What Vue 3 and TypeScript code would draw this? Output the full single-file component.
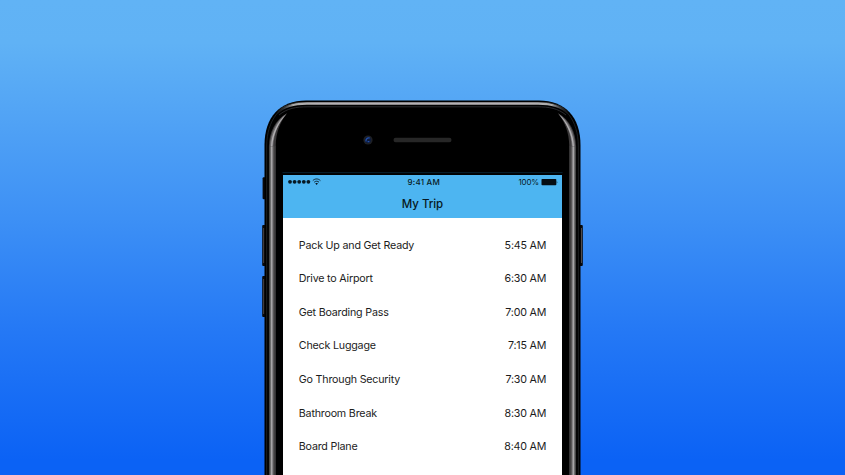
<script setup lang="ts">
interface Stop {
  name: string
  time: string
}

const stops: Stop[] = [
  { name: 'Pack Up and Get Ready', time: '5:45 AM' },
  { name: 'Drive to Airport', time: '6:30 AM' },
  { name: 'Get Boarding Pass', time: '7:00 AM' },
  { name: 'Check Luggage', time: '7:15 AM' },
  { name: 'Go Through Security', time: '7:30 AM' },
  { name: 'Bathroom Break', time: '8:30 AM' },
  { name: 'Board Plane', time: '8:40 AM' },
]
</script>

<template>
  <main class="stage">
    <section class="phone">
      <svg class="body" viewBox="260 98 326 377" aria-hidden="true">
        <defs>
          <linearGradient id="rail" gradientUnits="userSpaceOnUse" x1="268.5" x2="276.5" y1="0" y2="0">
            <stop offset="0" stop-color="#111" />
            <stop offset=".12" stop-color="#444" />
            <stop offset=".28" stop-color="#777" />
            <stop offset=".4" stop-color="#b4b2b4" />
            <stop offset=".5" stop-color="#858385" />
            <stop offset=".66" stop-color="#4b494a" />
            <stop offset=".9" stop-color="#302f30" />
            <stop offset="1" stop-color="#000" />
          </linearGradient>
          <linearGradient id="topEdge" gradientUnits="userSpaceOnUse" x1="276" x2="569" y1="0" y2="0">
            <stop offset="0" stop-color="#555" stop-opacity="0" />
            <stop offset=".06" stop-color="#aaa" />
            <stop offset=".14" stop-color="#b5b2b5" />
            <stop offset=".86" stop-color="#b5b2b5" />
            <stop offset=".94" stop-color="#aaa" />
            <stop offset="1" stop-color="#555" stop-opacity="0" />
          </linearGradient>
          <g id="side">
            <path fill="none" stroke="#26292b" stroke-width=".8" d="M266.7 480V146C266.7 120 281 103.5 298 102.6" />
            <path fill="url(#rail)" d="M268.7 145.8H276.5V480H268.7Z" />
            <path fill="#3b393a" d="M268.9 146.2C269.2 133 275 119.5 287 113.3C280 122.5 276 132 275.7 146.2Z" />
            <path fill="#6f6d6f" d="M269.8 146.2C270.3 133 276 120.5 287 113.3C279 122.5 274 132 273.3 146.2Z" />
            <path fill="#b0aeb0" d="M271 146.2C271.6 134 277 121.5 286 114.5C278.5 123 273.2 134 272.4 146.2Z" />
          </g>
        </defs>
        <g fill="#0a0a0c">
          <rect x="262.6" y="177.3" width="4" height="22" rx="1" />
          <rect x="262.2" y="225" width="4" height="41" rx="1" />
          <rect x="262.2" y="276" width="4" height="41" rx="1" />
          <rect x="578.8" y="225" width="4" height="41" rx="1" />
        </g>
        <g fill="#514b4a">
          <rect x="263.2" y="228" width="1" height="35" />
          <rect x="263.2" y="279" width="1" height="35" />
          <rect x="581" y="228" width="1" height="35" />
        </g>
        <path fill="#000" d="M264.5 480V145C264.5 117 280 100.5 306 100.5H539C565 100.5 580.5 117 580.5 145V480Z" />
        <path fill="none" stroke="url(#topEdge)" stroke-width="2.6" d="M277 113C284 105.8 293 103.5 307 103.5H538C552 103.5 561 105.8 568 113" />
        <path fill="none" stroke="#343538" stroke-width=".8" d="M279 115C287 108.3 296 106.8 308 106.8H537C549 106.8 558 108.3 566 115" />
        <use href="#side" />
        <use href="#side" transform="translate(845 0) scale(-1 1)" />
        <circle cx="368" cy="140" r="4.6" fill="#1e2025" />
        <circle cx="368" cy="140" r="3" fill="#0d1a3c" />
        <path fill="none" stroke="#2450a8" stroke-width="1.3" d="M366 141.5C365.6 139 367.2 137.6 369.6 138M367.6 141.6h1.8" />
        <rect x="393.5" y="137.8" width="58" height="4.4" rx="2.2" fill="#272727" />
        <rect x="282.5" y="172.3" width="280" height=".8" fill="#09283b" />
      </svg>

      <div class="screen">
        <header class="header">
          <div class="status">
            <div class="signal">
              <svg width="34" height="8" viewBox="0 0 34 8">
                <g fill="#071923">
                  <circle cx="2" cy="3.8" r="1.9" />
                  <circle cx="6.6" cy="3.8" r="1.9" />
                  <circle cx="11.2" cy="3.8" r="1.9" />
                  <circle cx="15.8" cy="3.8" r="1.9" />
                  <circle cx="20.4" cy="3.8" r="1.9" />
                </g>
                <path fill="none" stroke="#071923" stroke-width=".9" d="M24.8 2.6C27 .4 30.2 .4 32.4 2.6M26.2 4.2C27.6 2.9 29.6 2.9 31 4.2" />
                <path fill="#071923" d="M27.3 5.4C28.1 4.8 29.1 4.8 29.9 5.4L28.6 6.9Z" />
              </svg>
            </div>
            <span class="clock">9:41 AM</span>
            <div class="power">
              <span class="percent">100%</span>
              <svg width="17" height="7" viewBox="0 0 17 7">
                <rect x=".5" y="0" width="14.8" height="6.2" rx=".8" fill="#050d13" />
                <path fill="#050d13" d="M15.8 1.9Q17 3.1 15.8 4.4Z" />
              </svg>
            </div>
          </div>
          <h1 class="title">My Trip</h1>
        </header>
        <ul class="list">
          <li v-for="stop in stops" :key="stop.name" class="row">
            <span>{{ stop.name }}</span>
            <span class="time">{{ stop.time }}</span>
          </li>
        </ul>
      </div>
    </section>
  </main>
</template>

<style>
body {
  margin: 0;
  overflow: hidden;
}
</style>

<style scoped>
.stage {
  box-sizing: border-box;
  width: 845px;
  height: 475px;
  padding: 98px 0 0 260px;
  overflow: hidden;
  background: linear-gradient(180deg, #61b3f5 0%, #60b2f5 9%, #4fa1f5 27%, #3d90f5 46%, #2478f5 70%, #0b62f5 97%, #0b62f5 100%);
  font-family: Inter, "Liberation Sans", sans-serif;
}

.phone {
  position: relative;
  box-sizing: border-box;
  width: 326px;
  height: 377px;
  padding: 76.5px 24px 0 23px;
}

.body {
  position: absolute;
  inset: 0;
  width: 326px;
  height: 377px;
}

.screen {
  position: relative;
  height: 301px;
  background: #fff;
}

.header {
  height: 43.5px;
  background: #4db5f1;
  color: #071923;
}

.status {
  display: grid;
  grid-template-columns: 1fr auto 1fr;
  align-items: center;
  height: 15px;
  padding: 0 4px 0 5px;
  font-size: 8px;
  line-height: 15px;
}

.signal {
  display: flex;
}

.clock {
  font-weight: 500;
  letter-spacing: 0.2px;
  padding-left: 1.5px;
}

.power {
  display: flex;
  justify-content: flex-end;
  align-items: center;
  gap: 2px;
}

.percent {
  letter-spacing: -0.15px;
}

.title {
  margin: 0;
  padding-top: 5px;
  font-size: 11.5px;
  font-weight: 500;
  line-height: 18px;
  letter-spacing: -0.05px;
  text-align: center;
}

.list {
  margin: 0;
  padding: 10.3px 15.8px 0 15.8px;
  list-style: none;
}

.row {
  display: flex;
  justify-content: space-between;
  align-items: center;
  height: 33.6px;
  color: #1c1c1c;
  font-size: 10.7px;
  letter-spacing: -0.2px;
}

.time {
  letter-spacing: -0.2px;
}
</style>
